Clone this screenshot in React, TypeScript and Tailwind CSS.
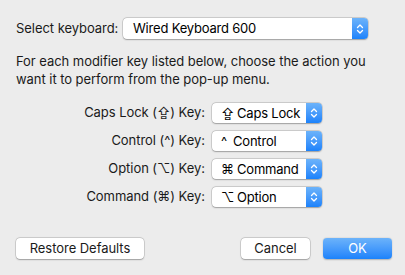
const font = { fontFamily: 'Inter, "DejaVu Sans", sans-serif' };

function Stepper() {
  return (
    <span className="flex h-full w-4 shrink-0 items-center justify-center rounded-r-[4px] bg-gradient-to-b from-[#6cb3fa] to-[#1a82fb]">
      <svg width="8" height="12" viewBox="0 0 8 12" fill="none" stroke="white" strokeWidth="1.3" strokeLinecap="round" strokeLinejoin="round">
        <path d="M1.5 4.5 L4 2 L6.5 4.5" />
        <path d="M1.5 7.5 L4 10 L6.5 7.5" />
      </svg>
    </span>
  );
}

const controlShadow = "shadow-[0_0_0_0.5px_rgba(0,0,0,0.2),0_0.5px_1.5px_rgba(0,0,0,0.25)]";

function Popup({ glyph, label, glyphWidth, className }: { glyph?: string; label: string; glyphWidth?: string; className: string }) {
  return (
    <div className={`flex items-center rounded-[4px] bg-white ${controlShadow} ${className}`}>
      <div className="flex min-w-0 flex-1 items-center whitespace-nowrap pl-[9px] text-[13px] leading-none tracking-[-0.2px] text-black">
        {glyph && <div className={`${glyphWidth} shrink-0`}>{glyph}</div>}
        <div className={glyph ? "" : "pl-px"}>{label}</div>
      </div>
      <Stepper />
    </div>
  );
}

const rows = [
  { key: "Caps Lock (⇪) Key:", glyph: "⇪", value: "Caps Lock", gw: "w-4" },
  { key: "Control (^) Key:", glyph: "^", value: "Control", gw: "w-3" },
  { key: "Option (⌥) Key:", glyph: "⌘", value: "Command", gw: "w-4" },
  { key: "Command (⌘) Key:", glyph: "⌥", value: "Option", gw: "w-4" },
];

export default function App() {
  return (
    <div className="h-[275px] w-[405px] bg-[#ececec] text-[13px] tracking-[-0.05px] text-[#1a1a1a]" style={font}>
      <div className="flex items-center pl-4 pt-[18px]">
        <span className="w-[107px]">Select keyboard:</span>
        <Popup label="Wired Keyboard 600" className="h-[21px] w-[245px]" />
      </div>

      <p className="mt-[13px] px-4 leading-[18px]">
        For each modifier key listed below, choose the action you want it to perform from the pop-up menu.
      </p>

      <div className="mt-[15px] flex flex-col gap-2">
        {rows.map((row) => (
          <div key={row.key} className="flex items-center">
            <span className="w-[205px] text-right">{row.key}</span>
            <span className="w-[7px]" />
            <Popup glyph={row.glyph} label={row.value} glyphWidth={row.gw} className="h-5 w-[110px]" />
          </div>
        ))}
      </div>

      <div className="mt-[31px] flex items-center pl-4 pr-[13px]">
        <button className={`h-[21px] w-[128px] rounded-[4px] bg-white ${controlShadow}`}>
          Restore Defaults
        </button>
        <div className="flex-1" />
        <button className={`h-[21px] w-[69px] rounded-[4px] bg-white ${controlShadow}`}>
          Cancel
        </button>
        <button className="ml-[13px] h-[21px] w-[69px] rounded-[4px] bg-gradient-to-b from-[#6cb3fa] to-[#1a82fb] text-white shadow-[0_0.5px_1.5px_rgba(0,0,0,0.25)]">
          OK
        </button>
      </div>
    </div>
  );
}
